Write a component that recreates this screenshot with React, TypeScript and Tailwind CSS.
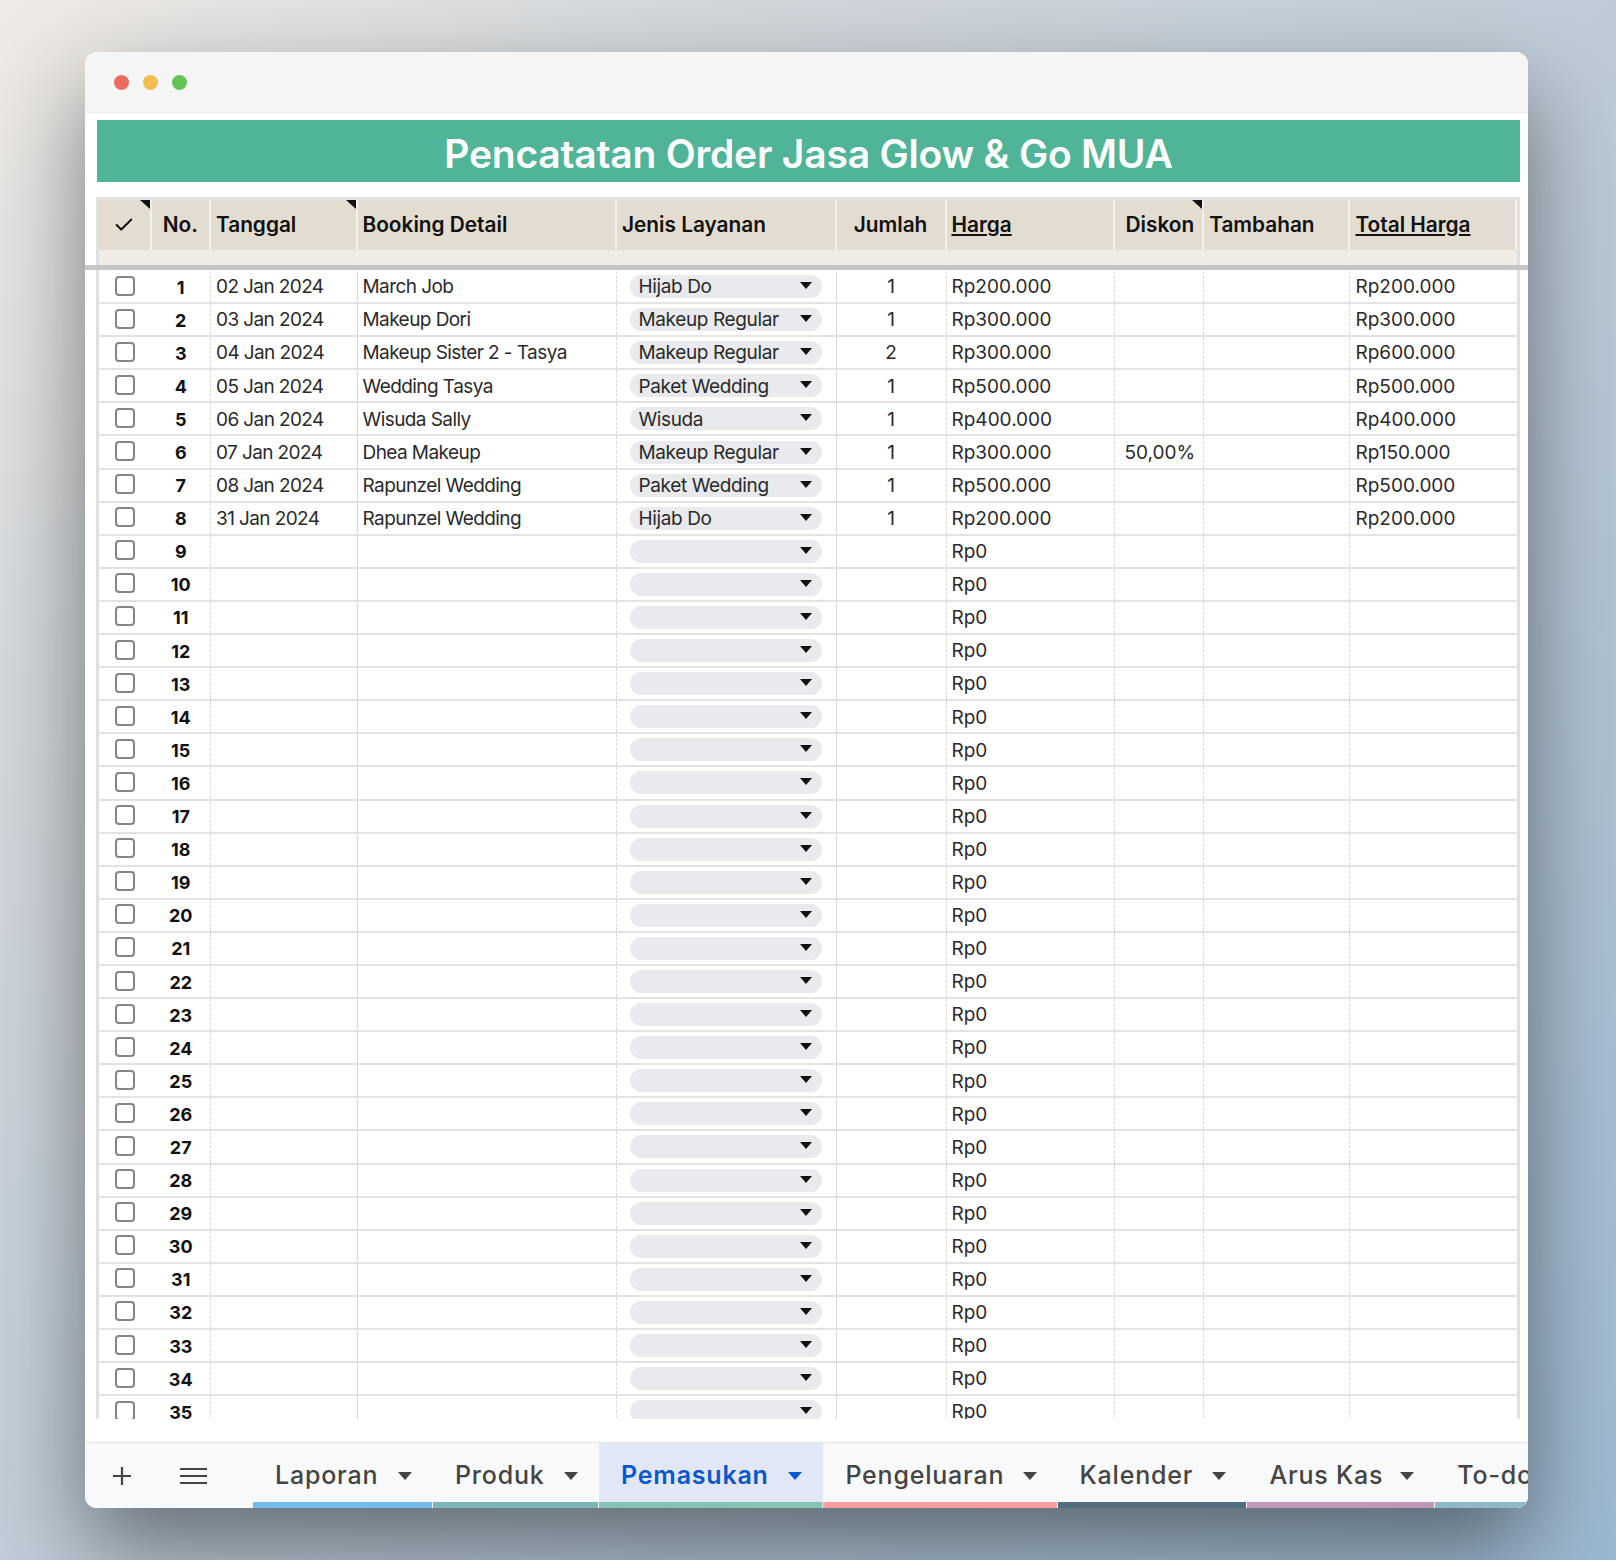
import React from "react";
import { Check } from "lucide-react";

const gridCols = "grid grid-cols-[52.5px_59.5px_146.5px_259.5px_219.5px_110px_168.7px_89px_146.3px_166.5px]";

type Row = { date?: string; detail?: string; service?: string; qty?: string; price: string; disc?: string; total?: string };

const data: Row[] = [
  { date: "02 Jan 2024", detail: "March Job", service: "Hijab Do", qty: "1", price: "Rp200.000", total: "Rp200.000" },
  { date: "03 Jan 2024", detail: "Makeup Dori", service: "Makeup Regular", qty: "1", price: "Rp300.000", total: "Rp300.000" },
  { date: "04 Jan 2024", detail: "Makeup Sister 2 - Tasya", service: "Makeup Regular", qty: "2", price: "Rp300.000", total: "Rp600.000" },
  { date: "05 Jan 2024", detail: "Wedding Tasya", service: "Paket Wedding", qty: "1", price: "Rp500.000", total: "Rp500.000" },
  { date: "06 Jan 2024", detail: "Wisuda Sally", service: "Wisuda", qty: "1", price: "Rp400.000", total: "Rp400.000" },
  { date: "07 Jan 2024", detail: "Dhea Makeup", service: "Makeup Regular", qty: "1", price: "Rp300.000", disc: "50,00%", total: "Rp150.000" },
  { date: "08 Jan 2024", detail: "Rapunzel Wedding", service: "Paket Wedding", qty: "1", price: "Rp500.000", total: "Rp500.000" },
  { date: "31 Jan 2024", detail: "Rapunzel Wedding", service: "Hijab Do", qty: "1", price: "Rp200.000", total: "Rp200.000" },
];
const rows: Row[] = [...data, ...Array.from({ length: 27 }, () => ({ price: "Rp0" }))];

const tabs = [
  { name: "Laporan", w: "w-[180px]", strip: "bg-[#73bcee]" },
  { name: "Produk", w: "w-[166px]", strip: "bg-[#7cb5b5]" },
  { name: "Pemasukan", w: "w-[224.4px]", strip: "bg-[#83c3b5]", active: true },
  { name: "Pengeluaran", w: "w-[234.2px]", strip: "bg-[#ff9e9e]" },
  { name: "Kalender", w: "w-[189.9px]", strip: "bg-[#526c82]" },
  { name: "Arus Kas", w: "w-[187.9px]", strip: "bg-[#c097b6]" },
  { name: "To-do", w: "w-[160px] shrink-0", strip: "bg-[#8fb8c8]", clipped: true },
];

function Corner() {
  return (
    <svg className="absolute right-0 top-0" width="10" height="9" viewBox="0 0 10 9">
      <polygon points="0,0 10,0 10,9" fill="#111" />
    </svg>
  );
}

function Head({ children, className = "", corner = false }: { children?: React.ReactNode; className?: string; corner?: boolean }) {
  return (
    <div className={`relative flex items-center text-[20.8px] font-semibold text-[#111] h-[50px] border-r-2 border-[#f4f1ec] ${className}`}>
      {children}
      {corner && <Corner />}
    </div>
  );
}

export default function App() {
  return (
    <div className="w-[1616px] h-[1560px] pl-[85px] pt-[52px] overflow-hidden bg-[linear-gradient(135deg,#efeae5_0%,#d3d8dc_22%,#c3ced8_45%,#b0c2d2_70%,#9cb8cf_100%)] font-['Inter','Liberation_Sans',sans-serif]">
      <div className="w-[1443px] h-[1456px] flex flex-col rounded-[12px] overflow-hidden bg-white shadow-[0_40px_90px_rgba(0,0,0,0.46)]">
        <div className="h-[61px] shrink-0 bg-[#f5f5f5] border-b border-[#ececec] flex items-center gap-[14.5px] pl-[29px] pt-[1px]">
          <span className="w-[14.5px] h-[14.5px] rounded-full bg-[#ee6a5f]" />
          <span className="w-[14.5px] h-[14.5px] rounded-full bg-[#f5bd4f]" />
          <span className="w-[14.5px] h-[14.5px] rounded-full bg-[#61c454]" />
        </div>

        <div className="pl-[12px] pr-[8px] pt-[7px] shrink-0">
          <div className="h-[62px] bg-[#50b498] flex items-center justify-center pt-[6px] text-white text-[39px] font-semibold tracking-[-0.2px]">
            Pencatatan Order Jasa Glow &amp; Go MUA
          </div>
        </div>

        <div className="pl-[11px] pr-[8px] pt-[15px] shrink-0">
          <div className="border-x-[3px] border-t-[3px] border-[#e0e0e0] bg-[#e3dcd0]">
            <div className={gridCols}>
              <Head className="justify-center" corner><Check size={22} strokeWidth={2.2} color="#111" /></Head>
              <Head className="justify-center">No.</Head>
              <Head className="pl-[5px]" corner>Tanggal</Head>
              <Head className="pl-[5px]">Booking Detail</Head>
              <Head className="pl-[5px]">Jenis Layanan</Head>
              <Head className="justify-center">Jumlah</Head>
              <Head className="pl-[5px] underline">Harga</Head>
              <Head className="justify-end pr-[8px]" corner>Diskon</Head>
              <Head className="pl-[5px]">Tambahan</Head>
              <Head className="pl-[5px] underline border-r-0">Total Harga</Head>
            </div>
            <div className="h-[15px] bg-[#f0ebe4]" />
          </div>
        </div>

        <div className="h-[5px] shrink-0 bg-[#c6c6c6]" />

        <div className="ml-[11px] mr-[8px] h-[1149px] pt-[1px] shrink-0 overflow-hidden border-x-[3px] border-[#e0e0e0] text-[19px] text-[#2a2a2a]">
          {rows.map((r, i) => (
            <div key={i} className={`${gridCols} h-[33.1px] border-b-2 border-[#e3e3e3]`}>
              <div className="flex items-center justify-center pb-[2px] pr-[1px]">
                <span className="w-[20px] h-[20px] rounded-[4px] border-2 border-[#858585] bg-white" />
              </div>
              <div className="flex items-center justify-center pt-[1px] font-bold text-[#111] text-[18px] border-r border-dashed border-[#d8d8d8]">{i + 1}</div>
              <div className="flex items-center pl-[5px] pt-[2px] tracking-[-0.6px] border-r border-[#d8d8d8] whitespace-nowrap">{r.date}</div>
              <div className="flex items-center pl-[5px] pt-[2px] tracking-[-0.57px] border-r border-dashed border-[#d8d8d8] whitespace-nowrap">{r.detail}</div>
              <div className="flex items-center pl-[13px] border-r border-[#d8d8d8]">
                <div className="w-[192px] h-[23px] rounded-full bg-[#e8eaed] flex items-center justify-between pl-[8.5px] pr-[10px]">
                  <span className="whitespace-nowrap tracking-[-0.37px] pt-[2px]">{r.service}</span>
                  <svg width="12" height="7" viewBox="0 0 12 7" className="shrink-0 mb-[2px]"><polygon points="0,0 12,0 6,7" fill="#111" /></svg>
                </div>
              </div>
              <div className="flex items-center justify-center pt-[2px] border-r border-dashed border-[#d8d8d8]">{r.qty}</div>
              <div className="flex items-center pl-[5px] pt-[2px] border-r border-dashed border-[#d8d8d8]">{r.price}</div>
              <div className="flex items-center justify-end pr-[8px] pt-[2px] border-r border-dashed border-[#d8d8d8]">{r.disc}</div>
              <div className="border-r border-dashed border-[#d8d8d8]" />
              <div className="flex items-center pl-[5px] pt-[2px]">{r.total}</div>
            </div>
          ))}
        </div>

        <div className="flex-1 bg-white" />

        <div className="h-[66px] shrink-0 border-t border-[#e8e8e8] bg-[#f8f9fa] flex overflow-hidden">
          <div className="w-[168px] shrink-0 flex items-center gap-[49px] pl-[28px] text-[#444]">
            <svg width="18" height="18" viewBox="0 0 18 18"><path d="M9 0v18M0 9h18" stroke="#444" strokeWidth="2.2" fill="none" /></svg>
            <svg width="27" height="18" viewBox="0 0 27 18"><path d="M0 2h27M0 9h27M0 16h27" stroke="#444" strokeWidth="2.2" fill="none" /></svg>
          </div>
          {tabs.map((t) => (
            <div key={t.name} className={`${t.w} shrink-0 flex flex-col ${t.active ? "bg-[#e1e7f5]" : ""}`}>
              <div className={`flex-1 flex items-center justify-between pl-[22px] pr-[21px] pt-[7px] text-[25px] tracking-[0.8px] font-medium whitespace-nowrap ${t.active ? "text-[#0b57d0] font-semibold" : "text-[#444]"}`}>
                <span>{t.name}</span>
                {!t.clipped && (
                  <svg width="14" height="8" viewBox="0 0 14 8" className="shrink-0"><polygon points="0,0 14,0 7,8" fill={t.active ? "#0b57d0" : "#444"} /></svg>
                )}
              </div>
              <div className={`h-[6px] mr-[1px] ${t.strip}`} />
            </div>
          ))}
        </div>
      </div>
    </div>
  );
}
